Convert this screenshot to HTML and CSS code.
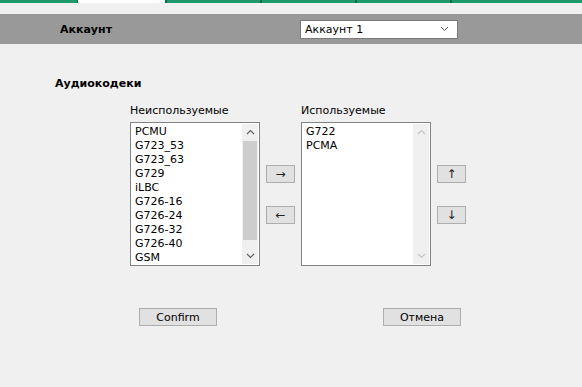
FILE: index.html
```html
<!DOCTYPE html>
<html lang="ru">
<head>
    <meta charset="UTF-8">
    <title>Аудиокодеки</title>
    <link rel="stylesheet" href="styles.css">
</head>
<body>
    <div class="tabs">
        <div class="tab tab-first"></div>
        <div class="tab tab-active"></div>
        <div class="tab"></div>
        <div class="tab"></div>
        <div class="tab"></div>
        <div class="tab tab-last"></div>
    </div>

    <div class="account-bar">
        <span class="account-label">Аккаунт</span>
        <div class="select">
            <span>Аккаунт 1</span>
            <svg class="chevron" width="9" height="6" viewBox="0 0 9 6"><path d="M1 1 L4.5 4.5 L8 1" fill="none" stroke="#555" stroke-width="1"/></svg>
        </div>
    </div>

    <h2 class="section-title">Аудиокодеки</h2>

    <div class="codecs">
        <div class="column">
            <div class="column-label">Неиспользуемые</div>
            <div class="listbox">
                <ul class="items">
                    <li>PCMU</li>
                    <li>G723_53</li>
                    <li>G723_63</li>
                    <li>G729</li>
                    <li>iLBC</li>
                    <li>G726-16</li>
                    <li>G726-24</li>
                    <li>G726-32</li>
                    <li>G726-40</li>
                    <li>GSM</li>
                </ul>
                <div class="scrollbar">
                    <svg class="sb-arrow" width="9" height="6" viewBox="0 0 9 6"><path d="M1 5 L4.5 1.5 L8 5" fill="none" stroke="#606060" stroke-width="1.2"/></svg>
                    <div class="sb-track"><div class="sb-thumb"></div></div>
                    <svg class="sb-arrow" width="9" height="6" viewBox="0 0 9 6"><path d="M1 1 L4.5 4.5 L8 1" fill="none" stroke="#606060" stroke-width="1.2"/></svg>
                </div>
            </div>
        </div>

        <div class="move-buttons">
            <button class="small-btn">&rarr;</button>
            <button class="small-btn">&larr;</button>
        </div>

        <div class="column">
            <div class="column-label">Используемые</div>
            <div class="listbox">
                <ul class="items">
                    <li>G722</li>
                    <li>PCMA</li>
                </ul>
                <div class="scrollbar scrollbar-off">
                    <svg class="sb-arrow" width="9" height="6" viewBox="0 0 9 6"><path d="M1 5 L4.5 1.5 L8 5" fill="none" stroke="#c4c4c4" stroke-width="1.2"/></svg>
                    <div class="sb-track"></div>
                    <svg class="sb-arrow" width="9" height="6" viewBox="0 0 9 6"><path d="M1 1 L4.5 4.5 L8 1" fill="none" stroke="#c4c4c4" stroke-width="1.2"/></svg>
                </div>
            </div>
        </div>

        <div class="move-buttons">
            <button class="small-btn">&uarr;</button>
            <button class="small-btn">&darr;</button>
        </div>
    </div>

    <div class="actions">
        <button class="action-btn">Confirm</button>
        <button class="action-btn">Отмена</button>
    </div>
</body>
</html>
```

FILE: styles.css
```css
:root {
    --page-bg: #f0f0f0;
    --bar-bg: #999999;
    --tab-green: #1f9a6c;
    --tab-dark: #0f6a48;
    --text-color: #000000;
    --border-color: #828282;
    --button-bg: #e1e1e1;
    --button-border: #adadad;
}

* {
    margin: 0;
    padding: 0;
    box-sizing: border-box;
}

body {
    font-family: Tahoma, "DejaVu Sans", "Liberation Sans", sans-serif;
    font-size: 11px;
    color: var(--text-color);
    background-color: var(--page-bg);
    width: 582px;
    height: 387px;
    overflow: hidden;
}

.tabs {
    display: flex;
    height: 3px;
    margin-bottom: 11px;
}

.tab {
    width: 95px;
    background-color: var(--tab-green);
    border-left: 2px solid var(--tab-dark);
}

.tab-first {
    width: 77px;
    border-left: none;
}

.tab-active {
    width: 88px;
    background-color: #ffffff;
    border-left: 1px solid var(--tab-dark);
}

.tab-last {
    flex-grow: 1;
}

.account-bar {
    display: flex;
    align-items: center;
    height: 30px;
    background-color: var(--bar-bg);
    padding-left: 60px;
}

.account-label {
    font-weight: bold;
    width: 240px;
}

.select {
    display: flex;
    align-items: center;
    justify-content: space-between;
    width: 158px;
    height: 19px;
    background-color: #ffffff;
    border: 1px solid #7a7a7a;
    padding: 0 8px 0 4px;
}

.section-title {
    font-size: 11px;
    font-weight: bold;
    margin: 32px 0 0 55px;
    height: 16px;
    line-height: 16px;
}

.codecs {
    display: flex;
    margin: 10px 0 0 130px;
}

.column {
    width: 130px;
}

.column-label {
    height: 20px;
    padding-top: 2px;
    line-height: 14px;
}

.listbox {
    display: flex;
    height: 144px;
    background-color: #ffffff;
    border: 1px solid var(--border-color);
    padding: 1px;
}

.items {
    list-style: none;
    flex-grow: 1;
    padding: 1px 0 0 3px;
}

.items li {
    height: 14px;
    line-height: 14px;
}

.scrollbar {
    display: flex;
    flex-direction: column;
    align-items: center;
    width: 16px;
    background-color: var(--page-bg);
}

.sb-arrow {
    margin: 5px 0;
    flex-shrink: 0;
}

.sb-track {
    flex-grow: 1;
    width: 100%;
    padding: 1px;
}

.sb-thumb {
    height: 99px;
    background-color: #cdcdcd;
}

.move-buttons {
    display: flex;
    flex-direction: column;
    gap: 23px;
    padding: 63px 6px 0 6px;
    width: 41px;
}

.small-btn {
    width: 29px;
    height: 18px;
    font-family: inherit;
    font-size: 12px;
    line-height: 14px;
    background-color: var(--button-bg);
    border: 1px solid var(--button-border);
    color: #222;
}

.actions {
    display: flex;
    gap: 166px;
    margin: 42px 0 0 139px;
}

.action-btn {
    width: 78px;
    height: 18px;
    font-family: inherit;
    font-size: 11px;
    background-color: var(--button-bg);
    border: 1px solid var(--button-border);
    color: #000;
}
```
